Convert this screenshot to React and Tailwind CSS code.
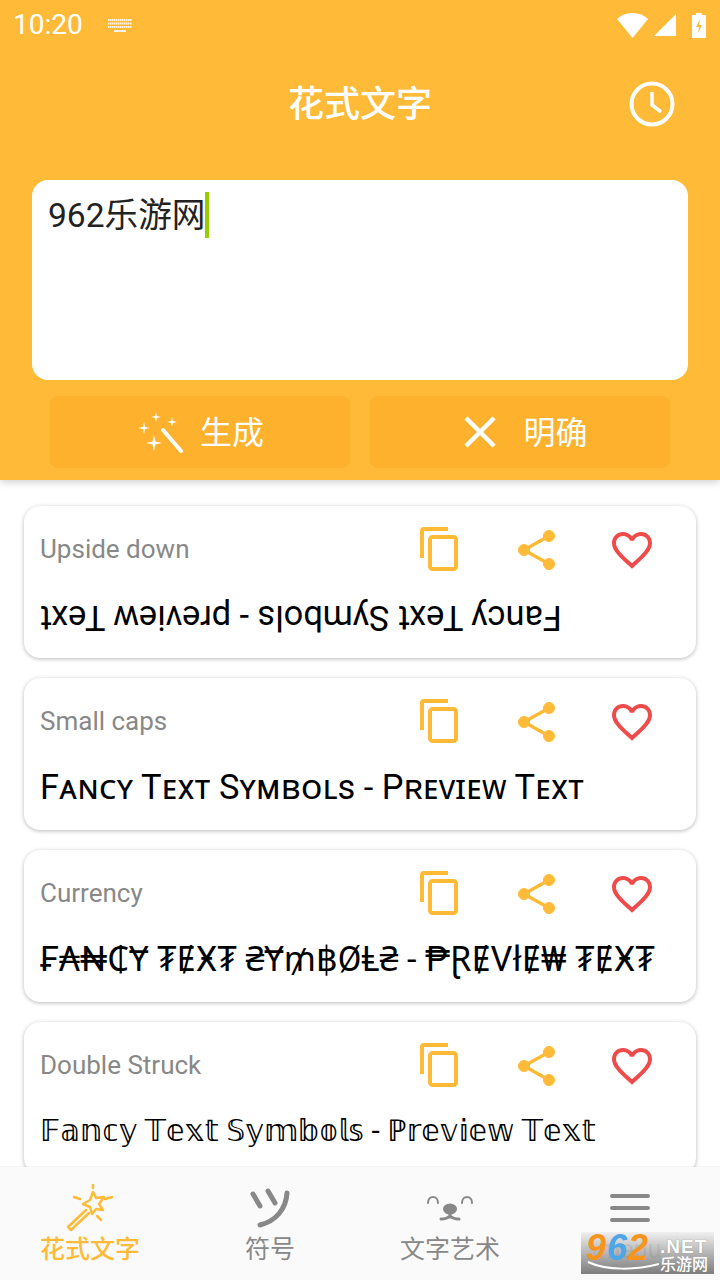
const cards = [
  { label: "Upside down", text: "Fancy Text Symbols - preview Text", flip: true, size: "text-[34.4px]" },
  { label: "Small caps", text: "Fᴀɴᴄʏ Tᴇxᴛ Sʏᴍʙᴏʟs - Pʀᴇᴠɪᴇᴡ Tᴇxᴛ", size: "text-[34.4px]" },
  { label: "Currency", text: "₣₳₦₵Ɏ ₮ɆӾ₮ ₴Ɏ₥฿ØⱠ₴ - ₱ⱤɆVłɆ₩ ₮ɆӾ₮", size: "text-[34.4px]" },
  { label: "Double Struck", text: "𝔽𝕒𝕟𝕔𝕪 𝕋𝕖𝕩𝕥 𝕊𝕪𝕞𝕓𝕠𝕝𝕤 - ℙ𝕣𝕖𝕧𝕚𝕖𝕨 𝕋𝕖𝕩𝕥", size: "text-[30px]" },
];
const sans = "font-['Roboto','Noto_Sans_CJK_SC','Noto_Sans','DejaVu_Sans',sans-serif]";

function Star({ x, y, r }) {
  const k = r * 0.18;
  return <path fill="white" d={`M${x} ${y - r}L${x + k} ${y - k}L${x + r} ${y}L${x + k} ${y + k}L${x} ${y + r}L${x - k} ${y + k}L${x - r} ${y}L${x - k} ${y - k}Z`} />;
}

function Copy() {
  return (
    <svg width="40" height="46" viewBox="0 0 40 46" fill="none" stroke="#FFBB38" strokeWidth="4">
      <path d="M2 31V4a2 2 0 0 1 2-2H28" />
      <rect x="10" y="10" width="26" height="32" rx="2.5" />
    </svg>
  );
}
function Share() {
  return (
    <svg className="ml-[4px]" width="40" height="48" viewBox="0 0 40 48" fill="#FFBB38" stroke="#FFBB38">
      <path d="M6 24L31 10M6 24L31 38" strokeWidth="3.5" fill="none" />
      <circle cx="6" cy="24" r="5.5" />
      <circle cx="31" cy="10" r="5.5" />
      <circle cx="31" cy="38" r="5.5" />
    </svg>
  );
}
function Heart() {
  return (
    <svg width="48" height="48" viewBox="0 0 24 24" fill="#EF4B4B">
      <path d="M16.5 3c-1.74 0-3.41.81-4.5 2.09C10.91 3.81 9.24 3 7.5 3 4.42 3 2 5.42 2 8.5c0 3.78 3.4 6.86 8.55 11.54L12 21.35l1.45-1.32C18.6 15.36 22 12.28 22 8.5 22 5.42 19.58 3 16.5 3zm-4.4 15.55l-.1.1-.1-.1C7.14 14.24 4 11.39 4 8.5 4 6.5 5.5 5 7.5 5c1.54 0 3.04.99 3.57 2.36h1.87C13.46 5.99 14.96 5 16.5 5c2 0 3.5 1.5 3.5 3.5 0 2.89-3.14 5.74-7.9 10.05z" />
    </svg>
  );
}

function Card({ label, text, flip, size }) {
  return (
    <div className="flex-none h-[152px] rounded-[16px] bg-white shadow-[0_1px_4px_rgba(0,0,0,0.28)] pl-4 pr-4 flex flex-col">
      <div className="flex items-center h-[48px] mt-[20px]">
        <span className="flex-1 text-[26px] leading-none text-[#888888] -mt-[2px]">{label}</span>
        <div className="w-[96px] flex justify-center"><Copy /></div>
        <div className="w-[96px] flex justify-center"><Share /></div>
        <div className="w-[96px] flex justify-center"><Heart /></div>
      </div>
      <div className={`mt-[22px] ${size} leading-[38px] text-black whitespace-nowrap`}>
        {flip ? <span className="block w-fit mt-[3px] rotate-180">{text}</span> : text}
      </div>
    </div>
  );
}

function NavItem({ icon, label, active }) {
  return (
    <div className="flex-1 flex flex-col items-center pt-[17px]">
      <div className="h-[48px] flex items-center justify-center">{icon}</div>
      <span className={`text-[25px] leading-[32px] mt-[2px] ${active ? "text-[#FFBB38] font-medium" : "text-[#888888]"}`}>{label}</span>
    </div>
  );
}

export default function App() {
  return (
    <div className={`relative w-[720px] h-[1280px] overflow-hidden bg-white flex flex-col ${sans}`}>
      <header className="flex-none h-[480px] bg-[#FFBB38] shadow-[0_2px_8px_rgba(0,0,0,0.2)] z-10 flex flex-col">
        <div className="h-[48px] flex items-center pl-[13px] pr-[14px] pt-[2px] text-white">
          <span className="text-[28px] leading-none">10:20</span>
          <svg className="ml-[25px]" width="24" height="13" viewBox="0 0 24 13" fill="none" stroke="#FFF" opacity="0.85" strokeWidth="2">
            <path d="M0 1h24M0 4.500h24M0 8h24" strokeDasharray="1.500 0.500" />
            <path d="M6 12h12" />
          </svg>
          <div className="flex-1" />
          <svg width="31" height="25" viewBox="0 0 31 25" fill="white"><path d="M0 6C4 2 9 0 15.500 0S27 2 31 6L15.500 25z" /></svg>
          <svg className="ml-[6px]" width="22" height="22" viewBox="0 0 22 22" fill="white"><path d="M22 0V22H0z" /></svg>
          <svg className="ml-[16px]" width="14" height="25" viewBox="0 0 14 25" fill="white">
            <path d="M4 0h6v2h4v23H0V2h4z" />
            <path d="M8 6L4 14h3l-1 6 4-8H7z" fill="#FFBB38" />
          </svg>
        </div>
        <div className="h-[112px] flex items-center justify-center relative">
          <span className="text-[36px] leading-none font-medium text-white translate-y-[1px]">花式文字</span>
          <svg className="absolute left-[628px] top-[32px]" width="48" height="48" viewBox="0 0 48 48" fill="none" stroke="white" strokeWidth="4">
            <circle cx="24" cy="24" r="20.500" />
            <path d="M24 12V25L33 32" strokeWidth="3.500" />
          </svg>
        </div>
        <div className="mt-[20px] mx-[32px] h-[200px] bg-white rounded-[16px] px-[16px] pt-[12px]">
          <div className="flex h-[46px] items-center">
            <span className="text-[33.6px] leading-none text-[#222222] mt-[1px]">962乐游网</span>
            <span className="w-[4px] h-[46px] bg-[#99CC00]" />
          </div>
        </div>
        <div className="mt-[16px] mx-[50px] flex gap-[20px]">
          <button className={`w-[300px] h-[72px] rounded-[8px] bg-[#FDB12D] flex items-center justify-center gap-[17px] pl-[3px] text-white text-[32px] ${sans}`}>
            <svg width="44" height="44" viewBox="0 0 44 44" fill="none">
              <Star x={17} y={7} r={5} />
              <Star x={33} y={12} r={5} />
              <Star x={5} y={18} r={6} />
              <Star x={15} y={33} r={8} />
              <path d="M24 20L42 41" stroke="white" strokeWidth="4" strokeLinecap="round" />
            </svg>
            <span className="translate-y-[1px]">生成</span>
          </button>
          <button className={`w-[300px] h-[72px] rounded-[8px] bg-[#FDB12D] flex items-center justify-center gap-[19px] pl-[4px] text-white text-[32px] ${sans}`}>
            <svg width="48" height="48" viewBox="0 0 48 48" fill="none" stroke="white" strokeWidth="4.500">
              <path d="M10 10L38 38M38 10L10 38" />
            </svg>
            <span className="translate-y-[1px]">明确</span>
          </button>
        </div>
      </header>

      <main className="flex-1 min-h-0 overflow-hidden px-[24px] pt-[26px] flex flex-col gap-[20px]">
        {cards.map((c) => <Card key={c.label} {...c} />)}
      </main>

      <nav className="flex-none h-[113px] bg-[#FAFAFA] z-10 flex shadow-[0_-1px_1px_rgba(0,0,0,0.04)]">
        <NavItem active label="花式文字" icon={
          <svg width="48" height="48" viewBox="0 0 48 48" fill="none" stroke="#FFBB38" strokeWidth="2.500" strokeLinecap="round" strokeLinejoin="round">
            <path d="M27 8L30 14L38 13L33 20L37 26L30 25L26 30L24 23L17 20L24 16Z" />
            <path d="M20 26L2 43L5 46L23 29" />
            <path d="M27 0V4M8 13L14 15M46 13L39 15M31 32L35 36" />
          </svg>
        } />
        <NavItem label="符号" icon={
          <svg width="40" height="42" viewBox="0 0 40 42" fill="none" stroke="#888888" strokeWidth="5" strokeLinecap="round">
            <path d="M3 7L10 19M18 4L25 16M37 6C36 22 26 34 10 38" />
          </svg>
        } />
        <NavItem label="文字艺术" icon={
          <svg width="48" height="36" viewBox="0 0 48 36" fill="none" stroke="#888888" strokeWidth="2" strokeLinecap="round">
            <path d="M2 13C2 5 12 5 12 13M36 13C36 5 46 5 46 13" />
            <ellipse cx="24" cy="19" rx="6" ry="4.500" fill="#888888" />
            <path d="M24 22V27M15 29C19 29 22 28 24 26C26 28 29 29 33 29" strokeWidth="3" />
          </svg>
        } />
        <NavItem label="menu" icon={
          <div className="flex flex-col gap-[8px] w-[40px]">
            <div className="h-[4px] rounded-full bg-[#888888]" />
            <div className="h-[4px] rounded-full bg-[#888888]" />
            <div className="h-[4px] rounded-full bg-[#888888]" />
          </div>
        } />
      </nav>

      <div className="absolute z-20 left-[581px] top-[1232px] w-[133px] h-[42px] bg-gradient-to-b from-[#eeeeee]/85 to-[#777777]/95">
        <span className="absolute left-[5px] top-[-2px] text-[36px] leading-[36px] font-bold italic tracking-[1px] text-[#F7941D] font-['Liberation_Sans',sans-serif]">9<span className="text-[#4DA6E8]">6</span>2</span>
        <span className="absolute left-[79px] top-[5px] text-[19px] leading-[19px] font-bold text-white tracking-[1px] font-['Liberation_Sans',sans-serif] [text-shadow:0_0_1px_#777]">.NET</span>
        <span className="absolute left-[79px] top-[24px] text-[16px] leading-[17px] font-medium text-white">乐游网</span>
        <svg className="absolute left-[6px] top-[28px]" width="72" height="12" viewBox="0 0 72 12" fill="none" stroke="white" strokeWidth="2"><path d="M1 2C20 11 50 10 72 4" /></svg>
      </div>
    </div>
  );
}
